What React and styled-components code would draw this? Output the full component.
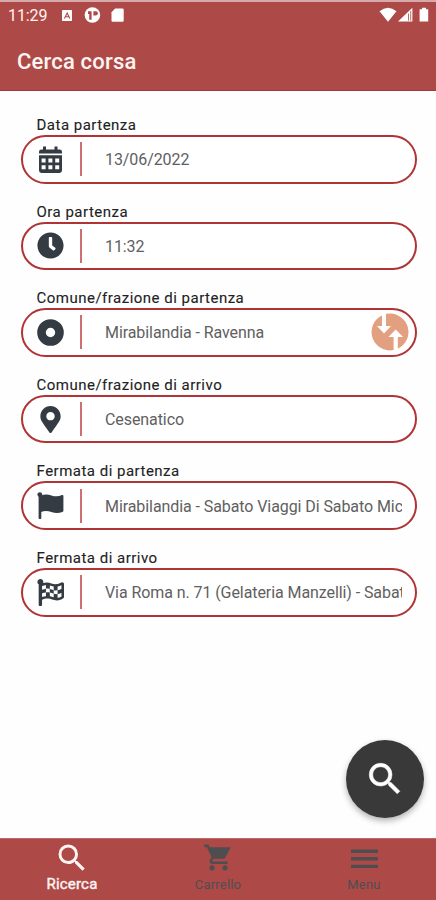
import styled, { createGlobalStyle } from 'styled-components';
import { FaClock, FaMapMarkerAlt, FaFlagCheckered } from 'react-icons/fa';
import { MdSearch } from 'react-icons/md';

const fields = [
  { label: 'Data partenza', value: '13/06/2022', Icon: CalendarIcon },
  { label: 'Ora partenza', value: '11:32', Icon: FaClock },
  {
    label: 'Comune/frazione di partenza',
    value: 'Mirabilandia - Ravenna',
    Icon: DotIcon,
    swap: true,
  },
  { label: 'Comune/frazione di arrivo', value: 'Cesenatico', Icon: FaMapMarkerAlt },
  {
    label: 'Fermata di partenza',
    value: 'Mirabilandia - Sabato Viaggi Di Sabato Mic',
    Icon: FlagIcon,
  },
  {
    label: 'Fermata di arrivo',
    value: 'Via Roma n. 71 (Gelateria Manzelli) - Sabat',
    Icon: FaFlagCheckered,
  },
];

const tabs = [
  { label: 'Ricerca', Icon: MdSearch, size: 36, active: true },
  { label: 'Carrello', Icon: CartIcon, size: 31 },
  { label: 'Menu', Icon: MenuIcon, size: 28 },
];

function StatusIcons() {
  return (
    <svg width='64' height='16' viewBox='0 0 64 16'>
      <rect x='1' y='3' width='10' height='11' rx='0.8' fill='#fff' />
      <path d='M3.4 11.5l2.8-5.5 2.6 5.5M4.4 9.7h3.4' fill='none' stroke='#ad4a48' strokeWidth='1.1' />
      <circle cx='31.4' cy='8' r='7.8' fill='#fff' />
      <path d='M27 4.2h3.6v8.6h-2.4V7H27z' fill='#ad4a48' />
      <path d='M32.4 4.2h2.4a2 2 0 0 1 0 4.2h-2.4z' fill='#ad4a48' />
      <path d='M54.2 1.5h7.2q1.3 0 1.3 1.3v10.6q0 1.3-1.3 1.3h-9.6q-1.3 0-1.3-1.3V5.3z' fill='#fff' />
    </svg>
  );
}

function SignalIcons() {
  return (
    <svg width='52' height='16' viewBox='0 0 52 16'>
      <path d='M0.5 4.3Q9 -2.8 17.5 4.3L9 14.8z' fill='#fff' />
      <path d='M33.4 0.8v13.8H19z' fill='#fff' />
      <path d='M29.5 6.5v7.2M31.7 4v9.7' stroke='#ad4a48' strokeWidth='0.8' />
      <path d='M43 0.8h4v1.4h2.2v12.4h-8.6V2.2H43z' fill='#fff' />
    </svg>
  );
}

function CalendarIcon({ size }) {
  return (
    <svg width={size} height={size} viewBox='0 0 27 27' fill='currentColor'>
      <path d='M6 0.4h3v3h8.5v-3h3v3h2q2.5 0 2.5 2.4v1.8h-23V5.8q0-2.4 2.5-2.4H6z' />
      <path
        fillRule='evenodd'
        d='M2 9.2h23v15.3q0 2.4-2.5 2.4h-18Q2 26.9 2 24.5zM4.6 12.6v4h4v-4zM11.4 12.6v4h4v-4zM18.2 12.6v4h4v-4zM4.6 19.2v4h4v-4zM11.4 19.2v4h4v-4zM18.2 19.2v4h4v-4z'
      />
    </svg>
  );
}

function DotIcon({ size }) {
  return (
    <svg width={size} height={size} viewBox='0 0 27 27'>
      <circle cx='13.5' cy='13.5' r='9' fill='none' stroke='currentColor' strokeWidth='8.6' />
    </svg>
  );
}

function FlagIcon({ size }) {
  return (
    <svg width={size} height={size} viewBox='0 0 27 27' fill='currentColor'>
      <circle cx='2.8' cy='2.6' r='2.4' />
      <path d='M1.6 2h2.7v24.2q0 .8-.8.8h-1.1q-.8 0-.8-.8z' />
      <path d='M4 3.4Q9 1.4 14.5 3.4T25 3q1.4-.3 1.4 1v14.8q0 .9-1 1.2-5.400 2-11 0T4 20z' />
    </svg>
  );
}

function SwapIcon() {
  return (
    <svg width='38' height='38' viewBox='0 0 38 38'>
      <circle cx='19' cy='19' r='18.5' fill='#e3a080' />
      <path d='M11 0h4v13h5l-7 7.5L6 13h5z' fill='#fff' />
      <path d='M22.6 38V24h-5.2l7.3-7.6 7.3 7.6h-5.2v14z' fill='#fff' />
    </svg>
  );
}

function CartIcon({ size }) {
  return (
    <svg width={size} height={size} viewBox='0 0 24 24' fill='currentColor'>
      <path d='M1 2v2h2l3.600 7.600-1.400 2.400C4.500 15.400 5.500 17 7 17h12v-2H7.400l-.2-.4.9-1.600h7.500c.7 0 1.400-.4 1.700-1L21.500 4H5.200l-.9-2z' />
      <circle cx='7' cy='20' r='2' />
      <circle cx='17' cy='20' r='2' />
    </svg>
  );
}

function MenuIcon({ size }) {
  return (
    <svg width={size} height={size} viewBox='0 0 28 28'>
      <path d='M1 7.200h27M1 14.800h27M1 22.400h27' stroke='currentColor' strokeWidth='3.4' />
    </svg>
  );
}

function Field({ label, value, Icon, swap }) {
  return (
    <FieldGroup>
      <Label>{label}</Label>
      <Box>
        <IconCell>
          <Icon size={27} />
        </IconCell>
        <Divider />
        <Value>{value}</Value>
        {swap && (
          <SwapButton aria-label='Scambia'>
            <SwapIcon />
          </SwapButton>
        )}
      </Box>
    </FieldGroup>
  );
}

function App() {
  return (
    <>
      <GlobalStyle />
      <Screen>
        <Header>
          <StatusBar>
            <Clock>11:29</Clock>
            <StatusIcons />
            <Spacer />
            <SignalIcons />
          </StatusBar>
          <Title>Cerca corsa</Title>
        </Header>
        <Form>
          {fields.map((field) => (
            <Field key={field.label} {...field} />
          ))}
        </Form>
        <SearchButton aria-label='Cerca'>
          <MdSearch size={42} />
        </SearchButton>
        <TabBar>
          {tabs.map(({ label, Icon, size, active }) => (
            <Tab key={label} $active={active}>
              <TabIcon>
                <Icon size={size} />
              </TabIcon>
              <TabLabel $active={active}>{label}</TabLabel>
            </Tab>
          ))}
        </TabBar>
      </Screen>
    </>
  );
}

const GlobalStyle = createGlobalStyle`
  * {
    box-sizing: border-box;
  }
  body {
    margin: 0;
    background: #fefefe;
    font-family: Roboto, sans-serif;
  }
  svg {
    display: block;
    flex-shrink: 0;
  }
  button {
    padding: 0;
    border: none;
    background: none;
  }
`;

const Screen = styled.div`
  position: relative;
  width: 436px;
  height: 900px;
  display: flex;
  flex-direction: column;
  overflow: hidden;
`;

const Header = styled.header`
  height: 90.5px;
  border-top: 2px solid #d8a9aa;
  border-bottom: 1.5px solid #a2393b;
  background: #ad4a48;
  color: #fff4f0;
`;

const StatusBar = styled.div`
  height: 26px;
  padding: 0 5px 0 8px;
  display: flex;
  align-items: center;
`;

const Clock = styled.span`
  width: 53px;
  font-size: 16px;
  letter-spacing: -0.1px;
`;

const Spacer = styled.div`
  flex: 1;
`;

const Title = styled.h1`
  margin: 20px 0 0 17px;
  font-size: 22px;
  font-weight: 500;
  line-height: 28px;
  letter-spacing: 0.18px;
`;

const Form = styled.main`
  flex: 1;
  padding: 26.5px 19px 0 21px;
`;

const FieldGroup = styled.div`
  height: 86.6px;
`;

const Label = styled.div`
  height: 18px;
  padding-left: 15.5px;
  color: #222;
  font-size: 15px;
  line-height: 17px;
  letter-spacing: 0.49px;
  -webkit-text-stroke: 0.1px #222;
`;

const Box = styled.div`
  position: relative;
  height: 48.6px;
  display: flex;
  align-items: center;
  padding-right: 13px;
  border: 2px solid #b03335;
  border-radius: 25px;
  background: #fff;
`;

const IconCell = styled.div`
  width: 57px;
  padding-right: 3px;
  flex-shrink: 0;
  display: flex;
  justify-content: center;
  color: #343b42;
`;

const Divider = styled.div`
  width: 1.5px;
  height: 34px;
  flex-shrink: 0;
  background: #cf7070;
`;

const Value = styled.div`
  flex: 1;
  margin-left: 23.5px;
  padding-top: 1px;
  overflow: hidden;
  white-space: nowrap;
  color: #606060;
  font-size: 16px;
  letter-spacing: -0.08px;
`;

const SwapButton = styled.button`
  position: absolute;
  top: 3px;
  right: 6px;
`;

const SearchButton = styled.button`
  position: absolute;
  right: 12px;
  bottom: 82px;
  width: 78px;
  height: 78px;
  display: flex;
  align-items: center;
  justify-content: center;
  border-radius: 50%;
  background: #393939;
  color: #fff;
  box-shadow: 0 3px 6px rgba(0, 0, 0, 0.3);
  path:last-child {
    stroke: #fff;
    stroke-width: 0.3px;
  }
`;

const TabBar = styled.nav`
  height: 62.5px;
  margin: 0 -1px;
  display: flex;
  border-top: 1px solid #b96a67;
  background: #ad4a48;
`;

const Tab = styled.div`
  flex: 1;
  display: flex;
  flex-direction: column;
  align-items: center;
  color: ${({ $active }) => ($active ? '#fff4f2' : '#504d50')};
`;

const TabIcon = styled.div`
  height: 37px;
  padding-top: 1px;
  display: flex;
  align-items: center;
`;

const TabLabel = styled.span`
  font-size: ${({ $active }) => ($active ? '15px' : '13px')};
  line-height: 17px;
  letter-spacing: 0.2px;
  -webkit-text-stroke: ${({ $active }) => ($active ? '0.4px' : '0')};
`;

export default App;
